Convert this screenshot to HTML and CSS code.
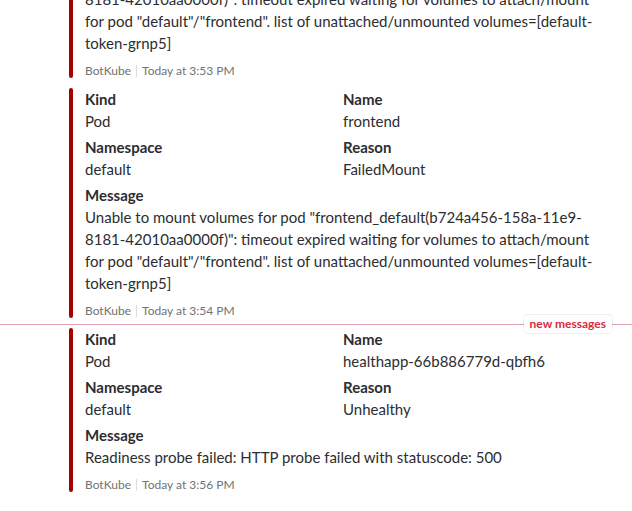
FILE: index.html
```html
<!DOCTYPE html>
<html lang="en">
<head>
<meta charset="utf-8">
<title>BotKube messages</title>
<link rel="stylesheet" href="styles.css">
</head>
<body>
<div class="messages">
  <div class="attachment">
    <div class="bar"></div>
    <div class="content">
      <div class="fields">
        <div class="field"><div class="title">Kind</div><div class="value">Pod</div></div>
        <div class="field"><div class="title">Name</div><div class="value">frontend</div></div>
        <div class="field"><div class="title">Namespace</div><div class="value">default</div></div>
        <div class="field"><div class="title">Reason</div><div class="value">FailedMount</div></div>
        <div class="field wide"><div class="title">Message</div><div class="value">Unable to mount volumes for pod "frontend_default(b724a456-158a-11e9-<wbr>8181-42010aa0000f)": timeout expired waiting for volumes to attach/mount for pod "default"/"frontend". list of unattached/unmounted volumes=[default-token-grnp5]</div></div>
      </div>
      <div class="footer"><span>BotKube</span><span class="sep"></span><span>Today at 3:53 PM</span></div>
    </div>
  </div>

  <div class="attachment">
    <div class="bar"></div>
    <div class="content">
      <div class="fields">
        <div class="field"><div class="title">Kind</div><div class="value">Pod</div></div>
        <div class="field"><div class="title">Name</div><div class="value">frontend</div></div>
        <div class="field"><div class="title">Namespace</div><div class="value">default</div></div>
        <div class="field"><div class="title">Reason</div><div class="value">FailedMount</div></div>
        <div class="field wide"><div class="title">Message</div><div class="value">Unable to mount volumes for pod "frontend_default(b724a456-158a-11e9-<wbr>8181-42010aa0000f)": timeout expired waiting for volumes to attach/mount for pod "default"/"frontend". list of unattached/unmounted volumes=[default-token-grnp5]</div></div>
      </div>
      <div class="footer"><span>BotKube</span><span class="sep"></span><span>Today at 3:54 PM</span></div>
    </div>
  </div>

  <div class="divider"><span class="badge">new messages</span></div>

  <div class="attachment">
    <div class="bar"></div>
    <div class="content">
      <div class="fields">
        <div class="field"><div class="title">Kind</div><div class="value">Pod</div></div>
        <div class="field"><div class="title">Name</div><div class="value">healthapp-66b886779d-qbfh6</div></div>
        <div class="field"><div class="title">Namespace</div><div class="value">default</div></div>
        <div class="field"><div class="title">Reason</div><div class="value">Unhealthy</div></div>
        <div class="field wide"><div class="title">Message</div><div class="value">Readiness probe failed: HTTP probe failed with statuscode: 500</div></div>
      </div>
      <div class="footer"><span>BotKube</span><span class="sep"></span><span>Today at 3:56 PM</span></div>
    </div>
  </div>
</div>
</body>
</html>
```

FILE: styles.css
```css
html, body {
  margin: 0;
  padding: 0;
  background: #ffffff;
  overflow: hidden;
}

body {
  font-family: Lato, "Noto Sans", sans-serif;
  font-size: 15px;
  line-height: 22px;
  color: #2c2d30;
}

.messages {
  margin-top: -152px;
  padding: 0 31px 0 69px;
  display: flex;
  flex-direction: column;
  gap: 10px;
}

.attachment {
  display: flex;
}

.bar {
  flex: 0 0 4px;
  width: 4px;
  background: #a30200;
  border-radius: 8px;
}

.content {
  flex: 1;
  padding-left: 12px;
  min-width: 0;
}

.fields {
  display: grid;
  grid-template-columns: 1fr 1fr;
  row-gap: 4px;
}

.field.wide {
  grid-column: 1 / -1;
}

.title {
  font-weight: 700;
}

.footer {
  margin-top: 9px;
  font-size: 12px;
  line-height: 15px;
  color: #717274;
  display: flex;
  align-items: center;
}

.sep {
  display: inline-block;
  width: 1px;
  height: 12px;
  background: #dcdcdc;
  margin: 0 5px;
}

.divider {
  position: relative;
  height: 1px;
  background: #e3a3ad;
  margin: -4px -31px -7px -69px;
}

.badge {
  position: absolute;
  right: 20px;
  top: -9px;
  height: 18px;
  line-height: 18px;
  padding: 0 6px;
  background: #ffffff;
  border-radius: 4px;
  box-shadow: 0 0 0 1px rgba(0, 0, 0, 0.06);
  color: #d72b3f;
  font-size: 12px;
  font-weight: 700;
}
```
